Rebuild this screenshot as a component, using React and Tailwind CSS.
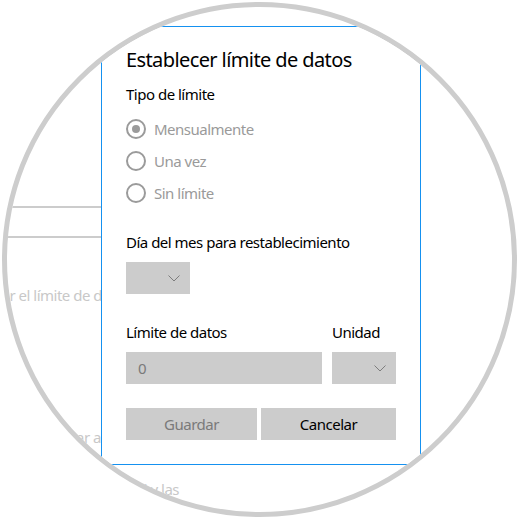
import { useState } from 'react';

function Chevron() {
  return (
    <svg width="12" height="7" viewBox="0 0 12 7" fill="none" className="shrink-0">
      <path d="M0.5 0.5L6 6L11.5 0.5" stroke="#7d7d7d" strokeWidth="1" />
    </svg>
  );
}

function Radio({ label, checked }) {
  return (
    <div className="flex h-8 items-center gap-2">
      <span className="flex h-5 w-5 items-center justify-center rounded-full border-2 border-[#9b9b9b]">
        {checked && <span className="h-2 w-2 rounded-full bg-[#9b9b9b]" />}
      </span>
      <span className="text-[15px] leading-5 tracking-[-0.5px] text-[#9a9a9a]">{label}</span>
    </div>
  );
}

export default function App() {
  const [tipo] = useState('mensual');

  return (
    <div className="h-[520px] w-[520px] bg-white p-[2px] font-['Noto_Sans',sans-serif]">
      <div className="relative h-[515px] w-[515px] overflow-hidden rounded-full border-[5px] border-[#cdcdcd] bg-white">
        {/* settings page behind the dialog */}
        <div className="pt-[199px] text-[15px] leading-5 tracking-[-0.5px] text-[#c8c8c8]">
          <div className="h-[2px] w-[100px] bg-[#cccccc]" />
          <div className="h-[28px]" />
          <div className="h-[2px] w-[100px] bg-[#cccccc]" />
          <div className="mt-[47px] flex w-[95px] justify-end whitespace-nowrap">
            <span>Establecer el límite de d</span>
          </div>
          <div className="mt-[122px] flex w-[94px] justify-end whitespace-nowrap">
            <span>para usar a</span>
          </div>
          <div className="mt-[32px] flex w-[172px] justify-end whitespace-nowrap">
            <span>Uso de red y las</span>
          </div>
        </div>

        {/* dialog */}
        <div className="absolute left-[94px] top-[19px] w-[320px] border border-[#1591f0] bg-white px-6 pb-6 pt-[19px] text-black">
          <h2 className="text-[20px] leading-7 tracking-[-0.6px]">Establecer límite de datos</h2>
          <div className="text-[15px] leading-5 tracking-[-0.5px]">
            <p className="mt-[10px]">Tipo de límite</p>
            <div className="mt-[9px]">
              <Radio label="Mensualmente" checked={tipo === 'mensual'} />
              <Radio label="Una vez" checked={tipo === 'una'} />
              <Radio label="Sin límite" checked={tipo === 'sin'} />
            </div>

            <p className="mt-[23px]">Día del mes para restablecimiento</p>
            <div className="mt-[10px] flex h-8 w-16 items-center justify-end bg-[#cccccc] pr-[10px]">
              <Chevron />
            </div>

            <div className="mt-[28px] flex gap-[10px]">
              <div className="w-[196px]">
                <p>Límite de datos</p>
                <div className="mt-[10px] flex h-8 items-center bg-[#cccccc] px-3 text-[#7a7a7a]">0</div>
              </div>
              <div className="w-16">
                <p>Unidad</p>
                <div className="mt-[10px] flex h-8 items-center justify-end bg-[#cccccc] pr-[10px]">
                  <Chevron />
                </div>
              </div>
            </div>

            <div className="mt-6 grid grid-cols-[131px_1fr] gap-1">
              <button className="h-8 bg-[#cccccc] tracking-[-0.5px] text-[#7a7a7a]">Guardar</button>
              <button className="h-8 bg-[#cccccc] tracking-[-0.5px] text-black">Cancelar</button>
            </div>
          </div>
        </div>
      </div>
    </div>
  );
}
